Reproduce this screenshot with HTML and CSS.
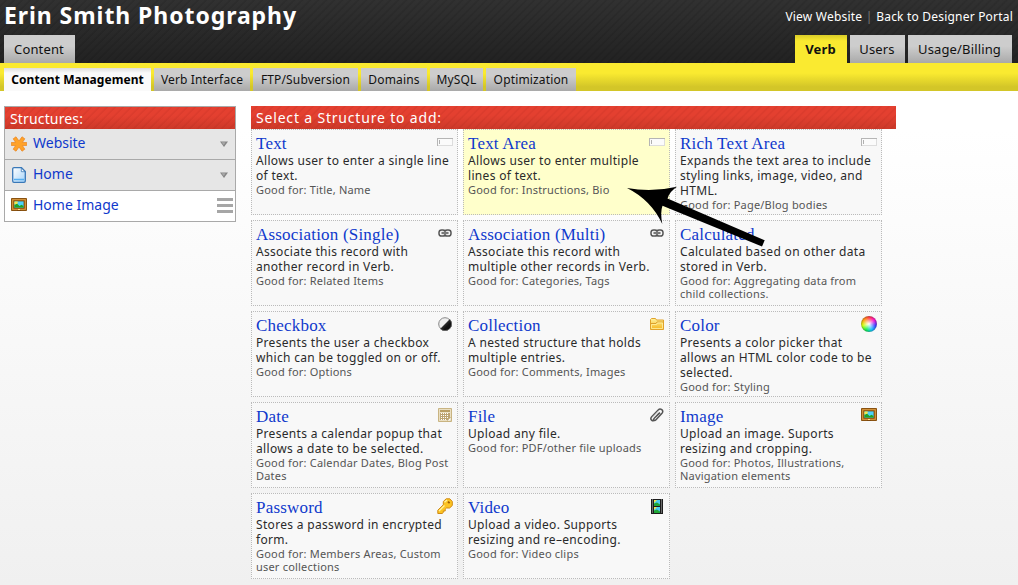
FILE: index.html
```html
<!DOCTYPE html>
<html lang="en">
<head>
<meta charset="utf-8">
<title>Erin Smith Photography</title>
<link rel="stylesheet" href="styles.css">
</head>
<body>
<svg class="defs" width="0" height="0">
  <defs>
    <linearGradient id="gGold" x1="0" y1="0" x2="0" y2="1"><stop offset="0" stop-color="#fff3a0"/><stop offset="1" stop-color="#f5b51b"/></linearGradient>
    <linearGradient id="gBlue" x1="0" y1="0" x2="1" y2="1"><stop offset="0" stop-color="#fff"/><stop offset="1" stop-color="#a5d4fa"/></linearGradient>
    <linearGradient id="gDark" x1="0" y1="0" x2="1" y2="1"><stop offset="0" stop-color="#777"/><stop offset=".6" stop-color="#111"/></linearGradient>
  </defs>
  <symbol id="field" viewBox="0 0 16 8"><path d="M0 0h16v8H0z" fill="#ddd"/><path d="M0 0h16v1H1v7H0z" fill="#b5b5b5"/><path d="M1 1h14v6H1z" fill="#fbfbfb"/><path d="M2 2h1v4H2z" fill="#b0b0b0"/></symbol>
  <symbol id="link" viewBox="0 0 14 8"><g fill="none" stroke="#555" stroke-width="1.500"><rect x="1" y="1" width="6.500" height="6" rx="2.600"/><rect x="6.500" y="1" width="6.500" height="6" rx="2.600"/></g><path d="M3.500 4h7" stroke="#ccc" stroke-width="2.600"/><path d="M3.500 4h7" stroke="#444" stroke-width="1.200"/></symbol>
  <symbol id="check" viewBox="0 0 14 14"><circle cx="7" cy="7" r="6.300" fill="#eee" stroke="#888"/><path d="M11.700 2.300A6.600 6.600 0 0 1 2.300 11.700z" fill="url(#gDark)"/><path d="M11.700 2.300A6.600 6.600 0 0 1 2.300 11.700" fill="none" stroke="#666"/></symbol>
  <symbol id="folder" viewBox="0 0 14 12"><path d="M.5 11.500V1.500L1.500.5h4l1 1.500h7v9.500z" fill="url(#gGold)" stroke="#e0a22a"/><path d="M1 5.500h5l1-1.500h6" fill="none" stroke="#dba02d"/><path d="M1.500 10.500v-4h5l1-1.500h5v5.500z" fill="none" stroke="#fff1a4" stroke-width=".8"/></symbol>
  <symbol id="date" viewBox="0 0 14 14"><path d="M.5.5h13v13H.5z" fill="#eadfc2" stroke="#c9b482"/><path d="M2 2h10v2H2z" fill="#b99e64"/><path d="M2 5h10v7H2z" fill="#bda472"/><path d="M3 5.500h8M3 7.500h8M3 9.500h8M3 11.500h5" stroke="#fff" stroke-dasharray="1 1"/><path d="M9 13l4-4v4z" fill="#fff" stroke="#c8b27e" stroke-width=".6"/></symbol>
  <symbol id="clip" viewBox="0 0 14 14"><g fill="none"><path d="M4.200 10.200L10 4.600M1.700 8.800L8.200 1.900c2.200-2.300 6 .5 3.800 3.300L6 11.700c-1.500 1.700-3 .3-2-1.100l5-5.400M1.700 8.800c-2.300 2.600.9 5.300 3.300 3.200" stroke="#555" stroke-width="1.500"/><path d="M2.400 9.400L8.800 2.600" stroke="#ccc" stroke-width=".8"/></g></symbol>
  <symbol id="picture" viewBox="0 0 16 14"><path d="M.5.5h15v12H.5z" fill="#b5701d" stroke="#8a5210"/><path d="M1.500 1.500h13v10h-13z" fill="none" stroke="#d0913a"/><path d="M3 3h10v7H3z" fill="#4ed1fb" stroke="#6b3c05" stroke-width=".7"/><path d="M3.500 9.600V7L6 5.500 8.500 8l2-1.300 2 1.300v1.600z" fill="#24a321"/><path d="M3.400 3.400h3.300v2l-3.300 1z" fill="#f8e74a"/><path d="M6 12h4v1H6z" fill="#7d480b"/><path d="M7 11h2v1H7z" fill="#ffe18b"/></symbol>
  <symbol id="key" viewBox="0 0 16 16"><path d="M9.200.8h3.600L15.300 3.500v4L12.600 10H9.500L8.200 11.300V13H6.300v1.500L5.200 15.500H.8v-3.300L6.300 6.800V3.500z" fill="#fcc321" stroke="#d08a14"/><path d="M7.500 4.200L10 2M2 13l5.500-5.500" stroke="#fff1a0" stroke-width="1.300"/><path d="M11 3.600l1.600 1.600" stroke="#9c5b03" stroke-width="1.800"/></symbol>
  <symbol id="film" viewBox="0 0 12 15"><path d="M0 0h12v15H0z" fill="#1c1c1c"/><path d="M3 1h6v6H3zM3 8h6v6H3z" fill="#4ccaf0"/><path d="M3 7V4.500l3-1 3 2V7zM3 14v-2.500l3-1 3 2V14z" fill="#20a635"/><path d="M3 1h3L3 4zM3 8h3l-3 3z" fill="#f5e64c"/><path d="M1.500.5v14M10.500.5v14" stroke="#bbb" stroke-dasharray="1 1"/></symbol>
  <symbol id="star" viewBox="0 0 16 16"><path d="M.3 6.500h4.300L2.200 2.800 5 .8 8 5 11 .8l2.800 2-2.400 3.700h4.300v3h-4.300l2.400 3.700-2.800 2L8 11l-3 4.200-2.800-2 2.400-3.700H.3z" fill="#ffa229" stroke="#ea8420" stroke-width=".7"/></symbol>
  <symbol id="doc" viewBox="0 0 14 16"><path d="M2 .7h7.500L13.300 4.500V14a1.300 1.300 0 0 1-1.300 1.300H2A1.300 1.300 0 0 1 .7 14V2A1.300 1.300 0 0 1 2 .7z" fill="url(#gBlue)" stroke="#3978b8" stroke-width="1.300"/><path d="M9.300 1v3.700H13z" fill="#fff" stroke="#3978b8" stroke-width=".8"/><path d="M2 12.500h10" stroke="#56aff0" stroke-width="1.500"/></symbol>
</svg>

<header class="top">
  <div class="brand-row">
    <h1>Erin Smith Photography</h1>
    <nav class="links"><a>View Website</a><i>|</i><a>Back to Designer Portal</a></nav>
  </div>
  <div class="tabs">
    <a class="tab t-content">Content</a>
    <div class="right"><a class="tab on t-verb">Verb</a><a class="tab t-users">Users</a><a class="tab t-usage">Usage/Billing</a></div>
  </div>
</header>
<nav class="subtabs">
  <a class="on s1">Content Management</a><a class="s2">Verb Interface</a><a class="s3">FTP/Subversion</a><a class="s4">Domains</a><a class="s5">MySQL</a><a class="s6">Optimization</a>
</nav>

<div class="page">
  <aside class="side">
    <h2 class="bar">Structures:</h2>
    <a class="row"><svg width="16" height="16"><use href="#star"/></svg><span>Website</span><svg class="caret" width="8" height="6"><path d="M0 .5h8L4 6z" fill="#858585"/><path d="M1.500 1.300h4L3.800 4z" fill="#aaa"/></svg></a>
    <a class="row"><svg class="doc" width="14" height="16"><use href="#doc"/></svg><span>Home</span><svg class="caret" width="8" height="6"><path d="M0 .5h8L4 6z" fill="#858585"/><path d="M1.500 1.300h4L3.800 4z" fill="#aaa"/></svg></a>
    <a class="row white"><svg width="16" height="14"><use href="#picture"/></svg><span>Home Image</span><svg class="grip" width="16" height="15"><path d="M0 0h16v3H0zM0 6h16v3H0zM0 12h16v3H0z" fill="#a6a6a6"/></svg></a>
  </aside>
  <main class="main">
    <h2 class="bar">Select a Structure to add:</h2>
    <div class="grid">
      <section class="card"><h3>Text<svg width="16" height="8" class="f"><use href="#field"/></svg></h3><p>Allows user to enter a single line<br>of text.</p><small>Good for: Title, Name</small></section>
      <section class="card hot"><h3>Text Area<svg width="16" height="8" class="f"><use href="#field"/></svg></h3><p>Allows user to enter multiple<br>lines of text.</p><small>Good for: Instructions, Bio</small></section>
      <section class="card"><h3>Rich Text Area<svg width="16" height="8" class="f"><use href="#field"/></svg></h3><p>Expands the text area to include<br>styling links, image, video, and<br>HTML.</p><small>Good for: Page/Blog bodies</small></section>
      <section class="card"><h3>Association (Single)<svg width="14" height="8" class="f n"><use href="#link"/></svg></h3><p>Associate this record with<br>another record in Verb.</p><small>Good for: Related Items</small></section>
      <section class="card"><h3>Association (Multi)<svg width="14" height="8" class="f n"><use href="#link"/></svg></h3><p>Associate this record with<br>multiple other records in Verb.</p><small>Good for: Categories, Tags</small></section>
      <section class="card"><h3>Calculated</h3><p>Calculated based on other data<br>stored in Verb.</p><small>Good for: Aggregating data from<br>child collections.</small></section>
      <section class="card"><h3>Checkbox<svg width="14" height="14" class="n"><use href="#check"/></svg></h3><p>Presents the user a checkbox<br>which can be toggled on or off.</p><small>Good for: Options</small></section>
      <section class="card"><h3>Collection<svg width="14" height="12" class="n d"><use href="#folder"/></svg></h3><p>A nested structure that holds<br>multiple entries.</p><small>Good for: Comments, Images</small></section>
      <section class="card"><h3>Color<span class="wheel"></span></h3><p>Presents a color picker that<br>allows an HTML color code to be<br>selected.</p><small>Good for: Styling</small></section>
      <section class="card"><h3>Date<svg width="14" height="14" class="n"><use href="#date"/></svg></h3><p>Presents a calendar popup that<br>allows a date to be selected.</p><small>Good for: Calendar Dates, Blog Post<br>Dates</small></section>
      <section class="card"><h3>File<svg width="14" height="14" class="n"><use href="#clip"/></svg></h3><p>Upload any file.</p><small>Good for: PDF/other file uploads</small></section>
      <section class="card"><h3>Image<svg width="16" height="14"><use href="#picture"/></svg></h3><p>Upload an image. Suports<br>resizing and cropping.</p><small>Good for: Photos, Illustrations,<br>Navigation elements</small></section>
      <section class="card"><h3>Password<svg width="16" height="16" class="k"><use href="#key"/></svg></h3><p>Stores a password in encrypted<br>form.</p><small>Good for: Members Areas, Custom<br>user collections</small></section>
      <section class="card"><h3>Video<svg width="12" height="15" class="v"><use href="#film"/></svg></h3><p>Upload a video. Supports<br>resizing and re&#8211;encoding.</p><small>Good for: Video clips</small></section>
    </div>
  </main>
</div>
<svg class="pointer" width="140" height="62" viewBox="626 186 140 62"><path d="M627 188Q652 192.500 677 186.700Q669 192 667.500 198.500L764.700 240.300L762 246.500L662.500 205.700Q660 212 662.300 224Q651 200 627 188z"/></svg>
</body>
</html>
```

FILE: styles.css
```css
* { box-sizing: border-box; }
body {
  margin: 0;
  height: 585px;
  overflow: hidden;
  position: relative;
  font-family: "Noto Sans", "Open Sans", sans-serif;
  font-size: 12px;
  color: #2a2a2a;
  background: linear-gradient(#fff 91px, #fff 130px, #f0f0f0 585px);
  white-space: nowrap;
}
.defs { position: absolute; }
h1, h2, h3, p { margin: 0; font-weight: normal; }

.top {
  height: 63px;
  display: flex;
  flex-direction: column;
  justify-content: space-between;
  background:
    repeating-linear-gradient(135deg, transparent 0 3px, rgba(0,0,0,.09) 4px 5px, transparent 5.660px),
    linear-gradient(#313131, #222);
}
.brand-row { display: flex; justify-content: space-between; height: 35px; padding: 0 5px 0 4px; }
h1 { font-size: 23px; font-weight: 700; line-height: 31px; color: #fff; letter-spacing: .93px; }
.links { display: flex; color: #fff; font-size: 12px; line-height: 34px; letter-spacing: .2px; }
.links i { font-style: normal; color: #777; width: 14px; text-align: center; }
.tabs { display: flex; justify-content: space-between; padding: 0 6px 0 4px; }
.right { display: flex; gap: 3px; }
.tab {
  height: 28px;
  line-height: 28px;
  text-align: center;
  font-size: 13px;
  letter-spacing: .15px;
  padding-right: 1px;
  color: #111;
  background: linear-gradient(#cdcdcd 40%, #a9a9a9);
}
.tab.on { font-weight: 700; background: linear-gradient(#d8cb28, #faea30 6px); }
.t-content { width: 71px; }
.t-verb { width: 52px; }
.t-users { width: 55px; }
.t-usage { width: 104px; }

.subtabs {
  height: 28px;
  padding: 5px 4px 0;
  display: flex;
  gap: 3px;
  background: linear-gradient(#faea30 36%, #d3c628 85%);
}
.subtabs a {
  height: 23px;
  line-height: 23px;
  text-align: center;
  letter-spacing: .15px;
  color: #111;
  background: linear-gradient(#cdcdcd 35%, #a9a9a9);
}
.subtabs .on { font-weight: 700; letter-spacing: .05px; background: linear-gradient(#ddd, #fafafa 5px); color: #000; }
.s1 { width: 147px; }
.s2 { width: 96px; }
.s3 { width: 105px; }
.s4 { width: 66px; }
.s5 { width: 53px; }
.s6 { width: 90px; }

.page { display: flex; gap: 15px; padding: 15px 4px 0; align-items: flex-start; }
.bar {
  height: 23px;
  line-height: 23px;
  padding-left: 5px;
  color: #fff;
  font-size: 14px;
  letter-spacing: .82px;
  background:
    repeating-linear-gradient(135deg, transparent 0 3px, rgba(90,0,0,.06) 4px 5px, transparent 5.660px),
    linear-gradient(#e44030 40%, #cc3929);
}
.side { width: 232px; border: 1px solid #a9a9a9; background: #e6e6e6; }
.side .bar { height: 22px; letter-spacing: .15px; }
.row {
  display: flex;
  align-items: center;
  height: 31px;
  padding: 0 2px 1px 6px;
  border-bottom: 1px solid #a9a9a9;
  color: #0f39cc;
  font-size: 14px;
}
.row .doc { margin: 0 1px; }
.row span { flex: 1; margin-left: 6px; line-height: 28px; padding-bottom: 2px; }
.row .caret { margin-right: 5px; }
.row.white { background: #fff; border-bottom: 0; height: 30px; padding-bottom: 2px; }
.row.white span { padding-bottom: 0; }

.main { width: 645px; }
.grid { display: grid; grid-template-columns: repeat(3, 207px); grid-auto-rows: 86px; gap: 5px; }
.card { border: 1px dotted #bbb; background: #f8f8f8; padding: 0 4px; }
.card.hot { background: #ffffcb; }
.card h3 {
  display: flex;
  justify-content: space-between;
  height: 23px;
  line-height: 27px;
  font-family: "Liberation Serif", serif;
  font-size: 17px;
  letter-spacing: .2px;
  color: #0f39cc;
}
.card h3 svg, .wheel { margin: 5px 0 0; }
.card h3 .n { margin-right: 1px; }
.card h3 .d { margin-top: 6px; }
.card h3 .f { margin-top: 8px; }
.card h3 .k { margin-top: 4px; }
.card h3 .v { margin: 5px 2px 0 0; }
.wheel {
  width: 16px;
  height: 16px;
  margin-top: 4px;
  border-radius: 50%;
  border: 1px solid rgba(90,90,90,.35);
  background: radial-gradient(#fff, rgba(255,255,255,0) 60%), conic-gradient(#f33, #f0c, #33f, #0bf, #0e4, #cf0, #f90, #f33);
  background-origin: border-box;
}
.card p { font-size: 12px; line-height: 15px; letter-spacing: .32px; }
.card small { display: block; font-size: 11px; line-height: 13px; letter-spacing: .2px; color: #555; }
.pointer { position: absolute; left: 626px; top: 186px; }
```
